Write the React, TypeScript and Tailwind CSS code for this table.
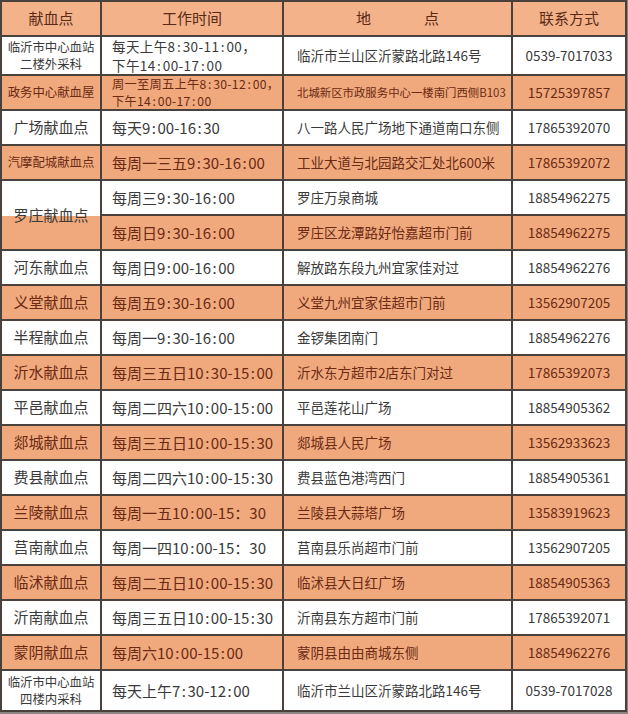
import React from "react";

type Row = {
  name?: string[];
  nameSize?: string;
  time: string[];
  timeSize?: string;
  timeLeading?: string;
  addr: string;
  addrSize?: string;
  phone: string;
  orange: boolean;
  span?: boolean;
  skipName?: boolean;
};

const rows: Row[] = [
  { name: ["临沂市中心血站", "二楼外采科"], nameSize: "text-[12.4px]", time: ["每天上午8:30-11:00，", "下午14:00-17:00"], timeSize: "text-[13.5px] tracking-[0.4px]", timeLeading: "leading-[18.5px]", addr: "临沂市兰山区沂蒙路北路146号", phone: "0539-7017033", orange: false },
  { name: ["政务中心献血屋"], nameSize: "text-[12.4px]", time: ["周一至周五上午8:30-12:00，", "下午14:00-17:00"], timeSize: "text-[12.2px] tracking-[0.3px]", timeLeading: "leading-[16.5px]", addr: "北城新区市政服务中心一楼南门西侧B103", addrSize: "text-[11.4px]", phone: "15725397857", orange: true },
  { name: ["广场献血点"], time: ["每天9:00-16:30"], addr: "八一路人民广场地下通道南口东侧", phone: "17865392070", orange: false },
  { name: ["汽摩配城献血点"], nameSize: "text-[12.4px]", time: ["每周一三五9:30-16:00"], addr: "工业大道与北园路交汇处北600米", phone: "17865392072", orange: true },
  { name: ["罗庄献血点"], span: true, time: ["每周三9:30-16:00"], addr: "罗庄万泉商城", phone: "18854962275", orange: false },
  { skipName: true, time: ["每周日9:30-16:00"], addr: "罗庄区龙潭路好怡嘉超市门前", phone: "18854962275", orange: true },
  { name: ["河东献血点"], time: ["每周日9:00-16:00"], addr: "解放路东段九州宜家佳对过", phone: "18854962276", orange: false },
  { name: ["义堂献血点"], time: ["每周五9:30-16:00"], addr: "义堂九州宜家佳超市门前", phone: "13562907205", orange: true },
  { name: ["半程献血点"], time: ["每周一9:30-16:00"], addr: "金锣集团南门", phone: "18854962276", orange: false },
  { name: ["沂水献血点"], time: ["每周三五日10:30-15:00"], addr: "沂水东方超市2店东门对过", phone: "17865392073", orange: true },
  { name: ["平邑献血点"], time: ["每周二四六10:00-15:00"], addr: "平邑莲花山广场", phone: "18854905362", orange: false },
  { name: ["郯城献血点"], time: ["每周三五日10:00-15:30"], addr: "郯城县人民广场", phone: "13562933623", orange: true },
  { name: ["费县献血点"], time: ["每周二四六10:00-15:30"], addr: "费县蓝色港湾西门", phone: "18854905361", orange: false },
  { name: ["兰陵献血点"], time: ["每周一五10:00-15：30"], addr: "兰陵县大蒜塔广场", phone: "13583919623", orange: true },
  { name: ["莒南献血点"], time: ["每周一四10:00-15：30"], addr: "莒南县乐尚超市门前", phone: "13562907205", orange: false },
  { name: ["临沭献血点"], time: ["每周二五日10:00-15:30"], addr: "临沭县大日红广场", phone: "18854905363", orange: true },
  { name: ["沂南献血点"], time: ["每周三五日10:00-15:30"], addr: "沂南县东方超市门前", phone: "17865392071", orange: false },
  { name: ["蒙阴献血点"], time: ["每周六10:00-15:00"], addr: "蒙阴县由由商城东侧", phone: "18854962276", orange: true },
  { name: ["临沂市中心血站", "四楼内采科"], nameSize: "text-[12.4px]", time: ["每天上午7:30-12:00"], addr: "临沂市兰山区沂蒙路北路146号", phone: "0539-7017028", orange: false },
];

function TimeText({ s }: { s: string }) {
  const parts = s.split(":");
  return (
    <>
      {parts.map((p, i) => (
        <React.Fragment key={i}>
          {i > 0 && <span className="px-[1.5px]">:</span>}
          {p}
        </React.Fragment>
      ))}
    </>
  );
}

export default function App() {
  return (
    <div className="w-[628px] h-[714px] bg-[#8a8583] font-['Noto_Sans_CJK_SC','Noto_Sans',sans-serif]">
      <div className="grid w-[627px] grid-cols-[98px_180px_227px_112px] grid-rows-[33px_37px_repeat(17,33px)_39px] gap-[2px] p-[2px] bg-[#4a403c]">
        <div className="bg-[#f3b28a] flex items-center justify-center text-[15px] text-[#5a2a16]">献血点</div>
        <div className="bg-[#f3b28a] flex items-center justify-center text-[15px] text-[#5a2a16]">工作时间</div>
        <div className="bg-[#f3b28a] flex items-center justify-center gap-[53px] text-[15px] text-[#5a2a16]">
          <span>地</span>
          <span>点</span>
        </div>
        <div className="bg-[#f3b28a] flex items-center justify-center text-[15px] text-[#5a2a16]">联系方式</div>

        {rows.map((r, i) => {
          const bg = r.orange ? "bg-[#f0a97c]" : "bg-white";
          const fg = r.orange ? "text-[#6a2a14]" : "text-[#3a3a3a]";
          return (
            <React.Fragment key={i}>
              {!r.skipName && (
                <div
                  className={`${
                    r.span
                      ? "row-span-2 bg-[linear-gradient(to_bottom,#ffffff_52%,#f0a97c_52%)] text-[#3a3a3a]"
                      : `${bg} ${fg}`
                  } flex flex-col items-center justify-center leading-[16.5px] ${r.nameSize ?? "text-[15px]"}`}
                >
                  {r.name!.map((n, k) => (
                    <span key={k}>{n}</span>
                  ))}
                </div>
              )}
              <div
                className={`${bg} ${fg} flex flex-col justify-center pl-[10px] whitespace-nowrap ${
                  r.timeSize ?? "text-[15px]"
                } ${r.timeLeading ?? "leading-[20px]"}`}
              >
                {r.time.map((t, k) => (
                  <span key={k}>
                    <TimeText s={t} />
                  </span>
                ))}
              </div>
              <div
                className={`${bg} ${fg} flex items-center pl-[13px] whitespace-nowrap ${
                  r.addrSize ?? "text-[13.5px]"
                }`}
              >
                {r.addr}
              </div>
              <div className={`${bg} ${fg} flex items-center justify-center text-[13.5px]`}>
                {r.phone}
              </div>
            </React.Fragment>
          );
        })}
      </div>
    </div>
  );
}
